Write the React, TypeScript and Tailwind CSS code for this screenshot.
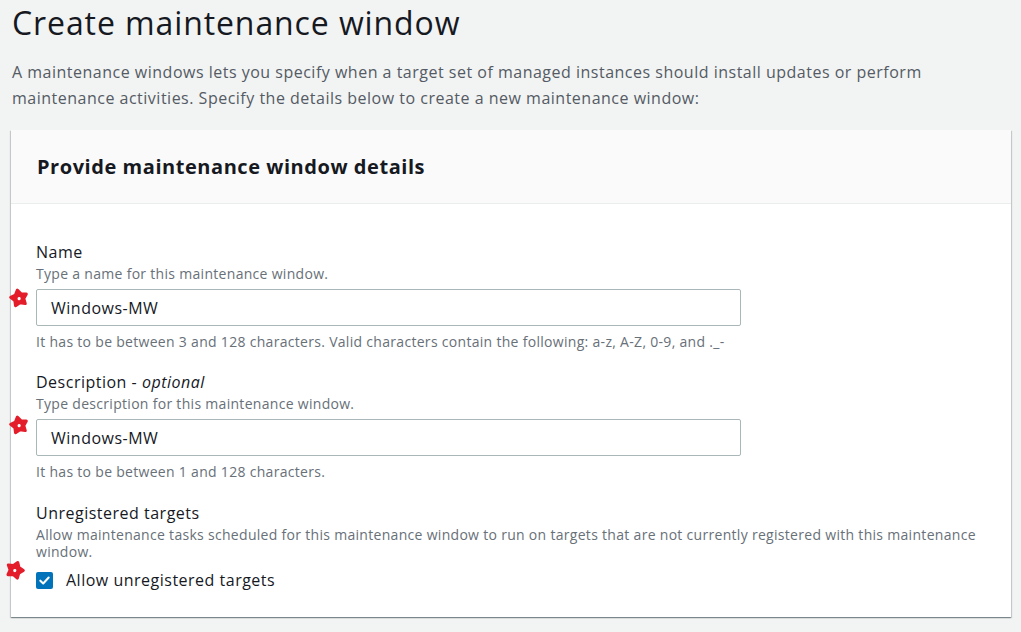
import React from 'react';

// Red annotation star drawn over the form
function Star({ className }: { className: string }) {
  return (
    <svg viewBox="0 0 20 20" className={className}>
      <polygon
        points="10,2 12.9,6.3 18,7.6 14.6,11.6 15,16.8 10,14.8 5,16.8 5.4,11.6 2,7.6 7.1,6.3"
        fill="#e41d2b"
        stroke="#e41d2b"
        strokeWidth="3"
        strokeLinejoin="round"
      />
      <circle cx="10" cy="10.6" r="1.6" fill="#fff" />
    </svg>
  );
}

function Field({
  label,
  optional,
  hint,
  value,
  constraint,
}: {
  label: string;
  optional?: boolean;
  hint: string;
  value: string;
  constraint: string;
}) {
  return (
    <div>
      <div className="text-[16px] leading-[22px] tracking-[0.5px] text-[#16191f]">
        {label}
        {optional && (
          <>
            {' - '}
            <i>optional</i>
          </>
        )}
      </div>
      <div className="mt-[2px] text-[14px] leading-[18px] tracking-[0.3px] text-[#687078]">{hint}</div>
      <div className="mt-[6px] flex h-[37px] w-[705px] items-center rounded-[2px] border border-[#aab7b8] bg-white px-[14px] text-[16px] tracking-[0.5px] text-[#16191f]">
        {value}
      </div>
      <div className="mt-[7px] text-[14px] leading-[18px] tracking-[0.3px] text-[#687078]">{constraint}</div>
    </div>
  );
}

export default function App() {
  return (
    <div
      className="relative h-[632px] w-[1021px] overflow-hidden bg-[#f2f3f3] pl-[11px]"
      style={{ fontFamily: '"Open Sans", "Noto Sans", sans-serif' }}
    >
      <h1 className="pl-[1px] pt-[3px] text-[32px] leading-[40px] tracking-[0.9px] text-[#16191f]">
        Create maintenance window
      </h1>
      <p className="mt-[16px] w-[960px] pl-[1px] text-[16px] leading-[26px] tracking-[0.5px] text-[#545b64]">
        A maintenance windows lets you specify when a target set of managed instances should install updates or perform
        maintenance activities. Specify the details below to create a new maintenance window:
      </p>

      <div className="mt-[19px] w-[1000px] bg-white shadow-[0_1px_1px_0_rgba(0,28,36,0.3),1px_1px_1px_0_rgba(0,28,36,0.15),-1px_1px_1px_0_rgba(0,28,36,0.15)]">
        <div className="flex h-[74px] items-center border-b border-[#eaeded] bg-[#fafafa] px-[26px]">
          <h2 className="text-[20px] font-bold tracking-[0.55px] text-[#16191f]">Provide maintenance window details</h2>
        </div>

        <div className="px-[25px] pb-[27px] pt-[37px]">
          <Field
            label="Name"
            hint="Type a name for this maintenance window."
            value="Windows-MW"
            constraint="It has to be between 3 and 128 characters. Valid characters contain the following: a-z, A-Z, 0-9, and ._-"
          />
          <div className="mt-[20px]">
            <Field
              label="Description"
              optional
              hint="Type description for this maintenance window."
              value="Windows-MW"
              constraint="It has to be between 1 and 128 characters."
            />
          </div>

          <div className="mt-[21px]">
            <div className="text-[16px] leading-[22px] tracking-[0.5px] text-[#16191f]">Unregistered targets</div>
            <div className="mt-[2px] text-[14px] leading-[17px] tracking-[0.3px] text-[#687078]">
              Allow maintenance tasks scheduled for this maintenance window to run on targets that are not currently registered with this maintenance window.
            </div>
            <div className="mt-[10px] flex items-center gap-[13px]">
              <div className="flex h-[17px] w-[17px] items-center justify-center rounded-[2px] bg-[#0073bb]">
                <svg viewBox="0 0 14 14" className="h-[13px] w-[13px]">
                  <path d="M2.5 7.2 L5.6 10.2 L11.5 3.8" fill="none" stroke="#fff" strokeWidth="2.2" strokeLinecap="round" strokeLinejoin="round" />
                </svg>
              </div>
              <span className="text-[16px] leading-[20px] tracking-[0.5px] text-[#16191f]">Allow unregistered targets</span>
            </div>
          </div>
        </div>
      </div>

      <Star className="absolute left-[9px] top-[288px] h-[20px] w-[20px] rotate-[-12deg]" />
      <Star className="absolute left-[9px] top-[415px] h-[20px] w-[20px] rotate-[-12deg]" />
      <Star className="absolute left-[5px] top-[560px] h-[20px] w-[20px] rotate-[20deg]" />
    </div>
  );
}
